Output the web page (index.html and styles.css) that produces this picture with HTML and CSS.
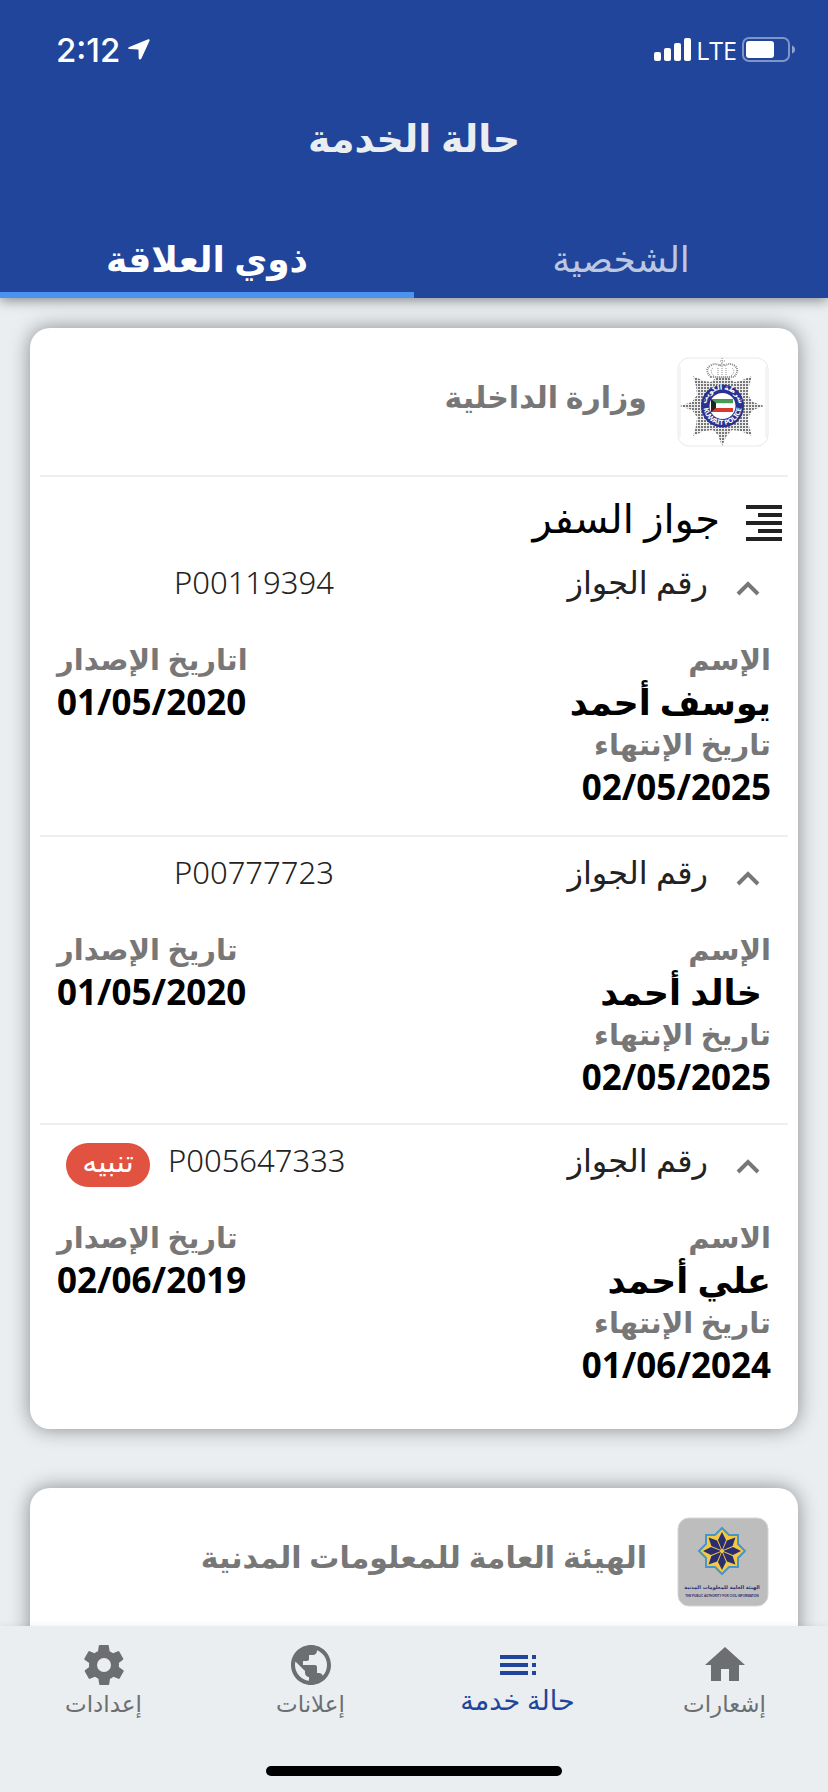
FILE: index.html
```html
<!DOCTYPE html>
<html lang="ar" dir="rtl">
<head>
<meta charset="utf-8">
<meta name="viewport" content="width=device-width, initial-scale=1">
<title>حالة الخدمة</title>
<link rel="stylesheet" href="styles.css">
</head>
<body>
<div class="app">
  <header class="header">
    <div class="status" dir="ltr">
      <div class="status-side">
        <span class="time">2:12</span>
        <svg class="location" viewBox="0 0 22 21" aria-hidden="true"><path d="M20.200.3 1.300 8C-.3 8.700-.1 10 1.300 10.100L10 10.500Q10.500 10.500 10.500 11L10.700 19C10.800 20.800 12.600 21 13.400 19.400L21.400 2C22 .6 21.400-.2 20.200.3Z"/></svg>
      </div>
      <div class="status-side status-end">
        <svg class="signal" viewBox="0 0 37 23" aria-hidden="true"><rect y="14" width="7" height="9" rx="2"/><rect x="10" y="10" width="7" height="13" rx="2"/><rect x="20" y="5" width="7" height="18" rx="2"/><rect x="30" width="7" height="23" rx="2"/></svg>
        <span class="network">LTE</span>
        <svg class="battery" viewBox="0 0 54 26" aria-hidden="true"><rect x="1" y="1" width="46" height="23" rx="6" fill="none" stroke="#7d95c8" stroke-width="2"/><rect x="4" y="4" width="28" height="17" rx="3" fill="#fff"/><path d="M50 8.500Q53 9.500 53 12.500T50 16.500Z" fill="#8fa4d0"/></svg>
      </div>
    </div>
    <h1 class="title">حالة الخدمة</h1>
    <div class="tabs" role="tablist">
      <button class="tab" role="tab" aria-selected="false">الشخصية</button>
      <button class="tab tab-active" role="tab" aria-selected="true">ذوي العلاقة</button>
    </div>
  </header>

  <main class="content">
    <article class="card">
      <div class="card-head">
        <svg class="logo" viewBox="0 0 92 90" role="img" aria-label="Kuwait Police">
          <rect x="1" y="1" width="90" height="88" rx="11" fill="#fff" stroke="#e8e8ee" stroke-width="1"/>
          <path d="M3 10V80M89 10V80" stroke="#e9e9ef" stroke-width="1"/>
          <defs>
            <pattern id="studs" width="3" height="3" patternUnits="userSpaceOnUse"><rect width="3" height="3" fill="#ececec"/><rect width="2" height="2" fill="#777"/></pattern>
            <path id="arc-bottom" d="M26.500 49A19 19 0 0 0 64.500 49"/>
            <path id="arc-top" d="M29 49A16.500 16.500 0 0 1 62 49"/>
          </defs>
          <path fill="url(#studs)" d="M45 89 41 78 36 73 27 74 16 79 19 69 20 60 15 53 3 49 15 45 20 38 19 29 16 19 27 24 34 25 40 20H51L57 25 63 24 75 19 72 29 71 38 76 45 87 49 76 53 71 60 72 69 75 79 64 74 55 73 50 78Z"/>
          <path fill="#fff" stroke="#888" stroke-width="2" stroke-dasharray="1 1" d="M34 20Q27 13 33 9Q38 5 43 9Q45 5 47 9Q53 5 58 9Q63 13 57 20Z"/>
          <path d="M37 19Q32 14 36 11M54 19Q59 14 55 11M45 9V19M41 18V11M49 18V11M45 1V7M43 4H48" fill="none" stroke="#888" stroke-dasharray="1 1"/>
          <circle cx="45.500" cy="49" r="21.500" fill="#2b3190"/>
          <circle cx="45.500" cy="49" r="13" fill="#fff"/>
          <path fill="#479b58" d="M34 42H56V46H34Z"/><path fill="#d9382f" d="M34 51H56V55H34Z"/><path fill="#e5e5e5" d="M38 46H56V47H38Z"/>
          <path fill="#222" d="M34 42 39 46V51L34 55Z"/>
          <text class="seal-text"><textPath href="#arc-bottom" startOffset="50%" text-anchor="middle">KUWAIT POLICE</textPath></text>
          <text class="seal-text" direction="rtl"><textPath href="#arc-top" startOffset="50%" text-anchor="middle">شرطة الكويت</textPath></text>
        </svg>
        <h2 class="agency">وزارة الداخلية</h2>
      </div>

      <div class="section">
        <svg class="list-icon" viewBox="0 0 36 36" aria-hidden="true"><path d="M0 0H36V4H0ZM12 8H36V12H12ZM0 16H36V20H0ZM12 24H36V28H12ZM0 32H36V36H0Z"/></svg>
        <h3 class="section-title">جواز السفر</h3>
      </div>

      <section class="record">
        <button class="record-head" aria-expanded="true">
          <svg class="chevron" viewBox="0 0 24 15" aria-hidden="true"><path d="M2 13 12 3 22 13"/></svg>
          <span class="record-label">رقم الجواز</span>
          <span class="number" dir="ltr">P00119394</span>
        </button>
        <div class="details">
          <dl class="fields"><dt>الإسم</dt><dd>يوسف أحمد</dd><dt>تاريخ الإنتهاء</dt><dd>02/05/2025</dd></dl>
          <dl class="fields fields-end"><dt>اتاريخ الإصدار</dt><dd>01/05/2020</dd></dl>
        </div>
      </section>

      <section class="record">
        <button class="record-head" aria-expanded="true">
          <svg class="chevron" viewBox="0 0 24 15" aria-hidden="true"><path d="M2 13 12 3 22 13"/></svg>
          <span class="record-label">رقم الجواز</span>
          <span class="number" dir="ltr">P00777723</span>
        </button>
        <div class="details">
          <dl class="fields"><dt>الإسم</dt><dd>&nbsp;خالد أحمد</dd><dt>تاريخ الإنتهاء</dt><dd>02/05/2025</dd></dl>
          <dl class="fields fields-end"><dt>تاريخ الإصدار</dt><dd>01/05/2020</dd></dl>
        </div>
      </section>

      <section class="record">
        <button class="record-head" aria-expanded="true">
          <svg class="chevron" viewBox="0 0 24 15" aria-hidden="true"><path d="M2 13 12 3 22 13"/></svg>
          <span class="record-label">رقم الجواز</span>
          <span class="number number-flagged" dir="ltr">P005647333</span>
          <span class="alert">تنبيه</span>
        </button>
        <div class="details">
          <dl class="fields"><dt>الاسم</dt><dd>علي أحمد</dd><dt>تاريخ الإنتهاء</dt><dd>01/06/2024</dd></dl>
          <dl class="fields fields-end"><dt>تاريخ الإصدار</dt><dd>02/06/2019</dd></dl>
        </div>
      </section>
    </article>

    <article class="card">
      <div class="card-head">
        <svg class="logo" viewBox="0 0 92 90" role="img" aria-label="The Public Authority for Civil Information">
          <rect x="1" y="1" width="90" height="88" rx="11" fill="#bdbdbd" stroke="#d5d5d5" stroke-width="1"/>
          <path fill="#f5c842" stroke="#4795c9" stroke-width="2" d="M45 11 52 18H61V27L68 34 61 41V50H52L45 57 38 50H29V41L22 34 29 27V18H38Z"/>
          <g fill="#2a2e70">
            <path id="petal" d="M45 33 41 23 45 15 49 23Z"/>
            <use href="#petal" transform="rotate(45 45 34)"/>
            <use href="#petal" transform="rotate(90 45 34)"/>
            <use href="#petal" transform="rotate(135 45 34)"/>
            <use href="#petal" transform="rotate(180 45 34)"/>
            <use href="#petal" transform="rotate(225 45 34)"/>
            <use href="#petal" transform="rotate(270 45 34)"/>
            <use href="#petal" transform="rotate(315 45 34)"/>
          </g>
          <circle cx="45" cy="34" r="2" fill="#f5c842"/>
          <text class="mark-text mark-ar" x="45" y="72" text-anchor="middle">الهيئة العامة للمعلومات المدنية</text>
          <text class="mark-text" x="45" y="80" text-anchor="middle" direction="ltr">THE PUBLIC AUTHORITY FOR CIVIL INFORMATION</text>
        </svg>
        <h2 class="agency">الهيئة العامة للمعلومات المدنية</h2>
      </div>
    </article>
  </main>

  <nav class="nav">
    <div class="nav-items">
      <a class="nav-item" href="#notifications">
        <svg viewBox="0 0 24 24" aria-hidden="true"><path d="M10 20v-6h4v6h5v-8h3L12 3 2 12h3v8z"/></svg>
        <span>إشعارات</span>
      </a>
      <a class="nav-item nav-active" href="#status" aria-current="page">
        <svg viewBox="0 0 24 24" aria-hidden="true"><path d="M3 9h14V7H3v2zm0 4h14v-2H3v2zm0 4h14v-2H3v2zm16 0h2v-2h-2v2zm0-10v2h2V7h-2zm0 6h2v-2h-2v2z"/></svg>
        <span>حالة خدمة</span>
      </a>
      <a class="nav-item" href="#ads">
        <svg viewBox="0 0 24 24" aria-hidden="true"><path d="M12 2C6.480 2 2 6.480 2 12s4.480 10 10 10 10-4.480 10-10S17.520 2 12 2zm-1 17.930c-3.950-.49-7-3.850-7-7.930 0-.62.080-1.210.210-1.790L9 15v1c0 1.100.9 2 2 2v1.930zm6.900-2.540c-.26-.81-1-1.390-1.900-1.390h-1v-3c0-.55-.45-1-1-1H8v-2h2c.55 0 1-.45 1-1V7h2c1.100 0 2-.9 2-2v-.41c2.930 1.190 5 4.060 5 7.410 0 2.080-.8 3.970-2.100 5.390z"/></svg>
        <span>إعلانات</span>
      </a>
      <a class="nav-item" href="#settings">
        <svg viewBox="0 0 24 24" aria-hidden="true"><path d="M19.400 13c0-.3.100-.6.100-1s0-.7-.1-1l2.100-1.600c.2-.2.200-.4.100-.6l-2-3.500c-.1-.2-.4-.3-.6-.2l-2.500 1c-.5-.4-1.100-.7-1.700-1l-.4-2.700c0-.2-.2-.4-.5-.4h-4c-.2 0-.4.200-.5.400l-.4 2.700c-.6.2-1.200.6-1.700 1l-2.500-1c-.2-.1-.5 0-.6.200l-2 3.500c-.1.200-.1.500.1.600L4.600 11c0 .3-.1.700-.1 1s0 .7.100 1l-2.100 1.600c-.2.200-.2.400-.1.600l2 3.500c.1.200.4.300.6.200l2.500-1c.5.400 1.100.7 1.700 1l.4 2.700c0 .2.200.4.500.4h4c.2 0 .5-.2.500-.4l.4-2.700c.6-.2 1.200-.6 1.700-1l2.500 1c.2.100.5 0 .6-.2l2-3.500c.1-.2.100-.5-.1-.6L19.400 13zM12 15.500a3.500 3.500 0 1 1 0-7 3.500 3.500 0 0 1 0 7z"/></svg>
        <span>إعدادات</span>
      </a>
    </div>
    <div class="home-bar"></div>
  </nav>
</div>
</body>
</html>
```
FILE: styles.css
```css
* { box-sizing: border-box; }

body, h1, h2, h3, dl, dd { margin: 0; }

body {
  background: #eaeef1;
  color: #000;
  font-family: "Noto Sans", "DejaVu Sans", sans-serif;
}

button {
  border: 0;
  padding: 0;
  background: none;
  color: inherit;
  font: inherit;
}

.app {
  display: flex;
  flex-direction: column;
  height: 100vh;
}

/* Header */
.header {
  position: relative;
  z-index: 1;
  flex: none;
  background: #20459b;
  color: #fff;
  box-shadow: 0 2px 12px rgba(0, 0, 0, 0.45);
}

.status {
  display: flex;
  justify-content: space-between;
  align-items: center;
  height: 99px;
  padding: 0 32px 0 56px;
}

.status-side { display: flex; align-items: center; gap: 8px; }
.status-end { gap: 5px; }
.time { font: 500 33px/40px Inter, sans-serif; }
.network { font: 25px/32px "Open Sans", sans-serif; }
.location { width: 22px; height: 21px; fill: #fff; }
.signal { width: 37px; height: 23px; fill: #fff; }
.battery { width: 54px; height: 26px; }

.title {
  height: 80px;
  color: #eaeef1;
  font-size: 38px;
  line-height: 76px;
  font-weight: 700;
  text-align: center;
}

.tabs { display: flex; height: 119px; }

.tab {
  flex: 1;
  padding-top: 46px;
  border-bottom: 6px solid transparent;
  color: #bcc8e1;
  font-size: 36px;
  line-height: 48px;
}

.tab-active {
  border-bottom-color: #4a93ee;
  color: #fff;
  font-weight: 700;
}

/* Cards */
.content {
  flex: 1;
  min-height: 0;
  padding: 30px 30px 0;
  overflow-y: auto;
  scrollbar-width: none;
}

.card {
  margin-bottom: 59px;
  padding: 0 10px 18px;
  border-radius: 20px;
  background: #fff;
  box-shadow: 0 0 20px rgba(0, 0, 0, 0.42);
}

.card-head {
  display: flex;
  align-items: center;
  gap: 30px;
  height: 149px;
  padding: 0 19px;
  border-bottom: 2px solid #eeeff0;
}

.logo { flex: none; width: 92px; height: 90px; }
.seal-text { fill: #fff; font: 700 7px "Noto Sans", "DejaVu Sans", sans-serif; }
.mark-text { fill: #2a2e70; font: 700 3px "Liberation Sans", sans-serif; }
.mark-ar { font: 700 5px "DejaVu Sans", sans-serif; }

.agency { padding-bottom: 10px; color: #777; font-size: 30px; line-height: 48px; font-weight: 700; }

.section {
  display: flex;
  align-items: center;
  gap: 26px;
  height: 70px;
  padding: 22px 6px 0;
}

.list-icon { width: 36px; height: 36px; fill: #222; }
.section-title { padding-bottom: 10px; font-size: 40px; line-height: 48px; font-weight: 400; }

.record + .record { border-top: 2px solid #eeeff0; }
.record { height: 288px; }

.record-head {
  display: flex;
  align-items: center;
  width: 100%;
  height: 70px;
  padding: 0 28px 0 26px;
  color: #222;
  font-size: 32px;
  line-height: 44px;
}

.chevron { width: 24px; height: 15px; margin: 12px 0 0 28px; fill: none; stroke: #777; stroke-width: 4; }
.record-label { margin-left: auto; }
.number { width: 266px; padding-left: 108px; text-align: left; font-size: 31px; font-weight: 300; }
.number-flagged { width: 182px; padding-left: 18px; box-sizing: content-box; }

.alert {
  width: 84px;
  height: 44px;
  margin-top: 10px;
  border-radius: 22px;
  background: #e15241;
  color: #fff;
  font-size: 30px;
  line-height: 36px;
  text-align: center;
}

.details {
  display: flex;
  justify-content: space-between;
  padding: 22px 17px 0 17px;
}

.fields dt { color: #777; font-size: 29px; line-height: 40px; height: 40px; font-weight: 700; }
.fields dd { font-size: 35px; line-height: 45px; height: 45px; font-weight: 700; }
.fields-end { text-align: left; }

/* Bottom navigation */
.nav {
  position: relative;
  z-index: 1;
  flex: none;
  background: #eaeef1;
  box-shadow: 0 -1px 6px rgba(0, 0, 0, 0.06);
}

.nav-items { display: flex; height: 140px; padding-top: 15px; }

.nav-item {
  display: flex;
  flex: 1;
  flex-direction: column;
  align-items: center;
  color: #6d6e71;
  font-size: 23px;
  line-height: 28px;
  text-decoration: none;
}

.nav-item svg { width: 48px; height: 48px; fill: currentColor; }
.nav-active { color: #20459b; font-size: 27px; line-height: 22px; }

.home-bar {
  width: 296px;
  height: 10px;
  margin: 0 auto 16px;
  border-radius: 5px;
  background: #000;
}
```
